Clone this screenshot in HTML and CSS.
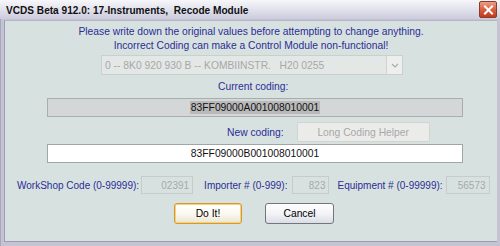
FILE: index.html
```html
<!DOCTYPE html>
<html>
<head>
<meta charset="utf-8">
<link rel="stylesheet" href="styles.css">
</head>
<body>
<div class="window">
  <div class="titlebar">
    <span class="title">VCDS Beta 912.0: 17-Instruments,&nbsp; Recode Module</span>
    <span class="close"><svg width="11" height="10" viewBox="0 0 11 10"><path d="M2 1.5 L9 8.5 M9 1.5 L2 8.5" stroke="#fff" stroke-width="2" stroke-linecap="square"/></svg></span>
  </div>
  <div class="frame">
    <div class="client">
      <div class="msg">Please write down the original values before attempting to change anything.</div>
      <div class="msg">Incorrect Coding can make a Control Module non-functional!</div>
      <div class="combo">
        <span class="combo-text">0 -- 8K0 920 930 B -- KOMBIINSTR.&nbsp;&nbsp; H20 0255</span>
        <span class="combo-arrow"><svg width="8" height="5" viewBox="0 0 8 5"><path d="M1 1 L4 4 L7 1" stroke="#aaaaaa" stroke-width="1.2" fill="none"/></svg></span>
      </div>
      <div class="label current">Current coding:</div>
      <div class="field grey"><span class="sel">83FF09000A001008010001</span></div>
      <div class="newrow">
        <span class="label">New coding:</span>
        <span class="btn disabled">Long Coding Helper</span>
      </div>
      <div class="field white">83FF09000B001008010001</div>
      <div class="codes">
        <span class="label">WorkShop Code (0-99999):</span>
        <span class="box w52">02391</span>
        <span class="label">Importer # (0-999):</span>
        <span class="box w37">823</span>
        <span class="label">Equipment # (0-99999):</span>
        <span class="box w44">56573</span>
      </div>
      <div class="buttons">
        <span class="btn push default">Do It!</span>
        <span class="btn push">Cancel</span>
      </div>
    </div>
  </div>
</div>
</body>
</html>
```

FILE: styles.css
```css
html, body {
  margin: 0;
  padding: 0;
  background: #ffffff;
}
.window {
  width: 500px;
  height: 246px;
  display: flex;
  flex-direction: column;
  font-family: "Liberation Sans", Arial, sans-serif;
  overflow: hidden;
  background: #b4b4c8;
}
.titlebar {
  height: 19px;
  flex: none;
  display: flex;
  align-items: center;
  justify-content: space-between;
  padding: 0 3px 0 6px;
  box-sizing: border-box;
  background: linear-gradient(#f6f6fa 0%, #e4e4ee 45%, #cbcbdd 100%);
}
.title {
  font-weight: bold;
  font-size: 10.1px;
  color: #101010;
  margin-top: 1px;
}
.close {
  width: 16px;
  height: 15px;
  display: flex;
  align-items: center;
  justify-content: center;
  border: 1px solid #8c3a2a;
  border-radius: 2px;
  background: linear-gradient(#eba089 0%, #d8603f 50%, #c03a1e 100%);
}
.frame {
  flex: 1;
  display: flex;
  padding: 1px 3px 4px 3px;
  background: #c3c3d4;
  border-left: 1px solid #a6a6bc;
}
.client {
  flex: 1;
  background: #d7e2e0;
  border-left: 1px solid #9d9db2;
  border-top: 1px solid #b6b6c8;
  border-bottom: 1px solid #9d9db2;
  display: flex;
  flex-direction: column;
  align-items: flex-start;
  padding-top: 4px;
  font-size: 10.3px;
  color: #2c2c96;
}
.msg {
  align-self: center;
  line-height: 14px;
  height: 14px;
}
.combo {
  margin-top: 2px;
  margin-left: 96px;
  width: 302px;
  height: 20px;
  border: 1px solid #c9d0ce;
  background: #e3e7e5;
  display: flex;
  align-items: center;
  justify-content: space-between;
  color: #a8a8a8;
  box-sizing: border-box;
}
.combo-text {
  padding-left: 3px;
}
.combo-arrow {
  width: 15px;
  height: 18px;
  border-left: 1px solid #cfd4d2;
  background: #eeeeec;
  display: flex;
  align-items: center;
  justify-content: center;
}
.label {
  color: #2c2c96;
  white-space: nowrap;
}
.current {
  margin-top: 5px;
  margin-left: 213px;
  line-height: 14px;
}
.field {
  width: 416px;
  height: 19px;
  margin-left: 42px;
  box-sizing: border-box;
  display: flex;
  align-items: center;
  justify-content: center;
  color: #111;
  border: 1px solid #a9adad;
}
.grey {
  margin-top: 4px;
  background: #d3d7d7;
}
.sel {
  background: #b9b9b9;
  padding: 0 1px;
  line-height: 13px;
}
.white {
  margin-top: 2px;
  background: #ffffff;
  border-color: #a0a6a6;
}
.newrow {
  margin-top: 5px;
  margin-left: 222px;
  display: flex;
  align-items: center;
  gap: 13px;
}
.btn {
  display: flex;
  align-items: center;
  justify-content: center;
  box-sizing: border-box;
}
.disabled {
  width: 133px;
  height: 20px;
  border: 1px solid #d0d5d3;
  border-radius: 2px;
  background: #ebecea;
  color: #a8a8a8;
}
.codes {
  margin-top: 13px;
  margin-left: 12px;
  display: flex;
  align-items: center;
  font-size: 10px;
}
.box {
  height: 18px;
  border: 1px solid #c6ccca;
  color: #a8a8a8;
  display: flex;
  align-items: center;
  justify-content: flex-end;
  padding-right: 3px;
  box-sizing: border-box;
  margin-left: 2px;
  margin-right: 11px;
}
.w52 { width: 52px; }
.w37 { width: 37px; margin-left: 5px; margin-right: 8px; }
.w44 { width: 44px; margin-left: 3px; margin-right: 0; }
.buttons {
  margin-top: 9px;
  margin-left: 169px;
  display: flex;
  gap: 23px;
}
.push {
  width: 69px;
  height: 21px;
  border: 1px solid #70767f;
  border-radius: 3px;
  background: linear-gradient(#ffffff 0%, #f3f3f7 50%, #dcdce6 100%);
  color: #000;
}
.default {
  width: 68px;
  border: 1px solid #d39a2e;
  box-shadow: inset 0 0 0 1px #f3d180;
  background: linear-gradient(#ffffff 0%, #fcf9f0 50%, #ede5d2 100%);
}
```
